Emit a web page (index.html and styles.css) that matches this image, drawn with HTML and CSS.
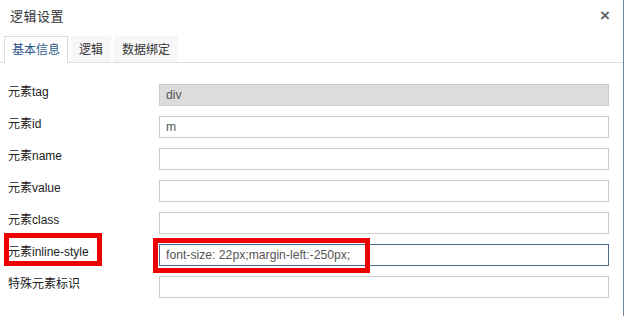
FILE: index.html
```html
<!DOCTYPE html>
<html lang="zh">
<head>
<meta charset="utf-8">
<title>逻辑设置</title>
<link rel="stylesheet" href="styles.css">
</head>
<body>
<div class="dialog">
  <div class="header">
    <span class="title">逻辑设置</span>
    <span class="close">×</span>
  </div>
  <div class="tabs">
    <div class="tab active">基本信息</div>
    <div class="tab">逻辑</div>
    <div class="tab">数据绑定</div>
  </div>
  <div class="form">
    <div class="row"><label class="lbl">元素tag</label><input class="inp readonly" value="div" readonly></div>
    <div class="row"><label class="lbl">元素id</label><input class="inp" value="m"></div>
    <div class="row"><label class="lbl">元素name</label><input class="inp" value=""></div>
    <div class="row"><label class="lbl">元素value</label><input class="inp" value=""></div>
    <div class="row"><label class="lbl">元素class</label><input class="inp" value=""></div>
    <div class="row"><label class="lbl">元素inline-style</label><input class="inp focus" value="font-size: 22px;margin-left:-250px;"></div>
    <div class="row"><label class="lbl">特殊元素标识</label><input class="inp" value=""></div>
  </div>
  <div class="mark mark-label"></div>
  <div class="mark mark-input"></div>
</div>
</body>
</html>
```
FILE: styles.css
```css
html, body {
  margin: 0;
  padding: 0;
  background: #ffffff;
}
body {
  width: 626px;
  height: 316px;
  overflow: hidden;
  font-family: "Liberation Sans", "Noto Sans CJK SC", sans-serif;
  font-size: 12px;
  color: #333;
}
.dialog {
  position: relative;
  width: 624px;
  height: 316px;
  border-right: 1px solid #6f84a0;
  box-sizing: border-box;
}
.header {
  height: 36px;
  display: flex;
  align-items: center;
  justify-content: space-between;
  padding: 0 13px 0 10px;
  box-sizing: border-box;
}
.title {
  font-size: 13px;
  color: #333;
  letter-spacing: 0.5px;
  margin-top: -6px;
}
.close {
  font-size: 17px;
  font-weight: bold;
  color: #666;
  line-height: 1;
  margin-top: -6px;
}
.tabs {
  display: flex;
  gap: 3px;
  padding-left: 4px;
  height: 26px;
  border-bottom: 1px solid #dddddd;
}
.tab {
  padding: 0 7px;
  line-height: 26px;
  font-size: 12px;
  background: #f7f7f7;
  color: #333;
  border: 1px solid transparent;
  border-bottom: none;
}
.tab.active {
  background: #fff;
  color: #2a5687;
  border-color: #dddddd;
  height: 26px;
  margin-bottom: -1px;
}
.form {
  display: flex;
  flex-direction: column;
  gap: 10px;
  padding: 21px 0 0 8px;
}
.row {
  display: flex;
  align-items: flex-start;
  height: 22px;
}
.lbl {
  width: 151px;
  line-height: 14px;
  font-size: 12px;
  color: #222;
  margin-top: 1px;
}
.inp {
  width: 450px;
  height: 22px;
  box-sizing: border-box;
  border: 1px solid #cccccc;
  padding: 0 6px;
  margin: 0;
  font-family: "Liberation Sans", "Noto Sans CJK SC", sans-serif;
  font-size: 12.2px;
  color: #555;
  background: #fff;
  outline: none;
}
.inp.readonly {
  background: #dcdcdc;
}
.inp.focus {
  border-color: #4a6b90;
}
.mark {
  position: absolute;
  border: 5px solid #ee0000;
  box-sizing: border-box;
}
.mark-label {
  left: 4px;
  top: 233px;
  width: 98px;
  height: 33px;
}
.mark-input {
  left: 153px;
  top: 238px;
  width: 217px;
  height: 35px;
}
```
